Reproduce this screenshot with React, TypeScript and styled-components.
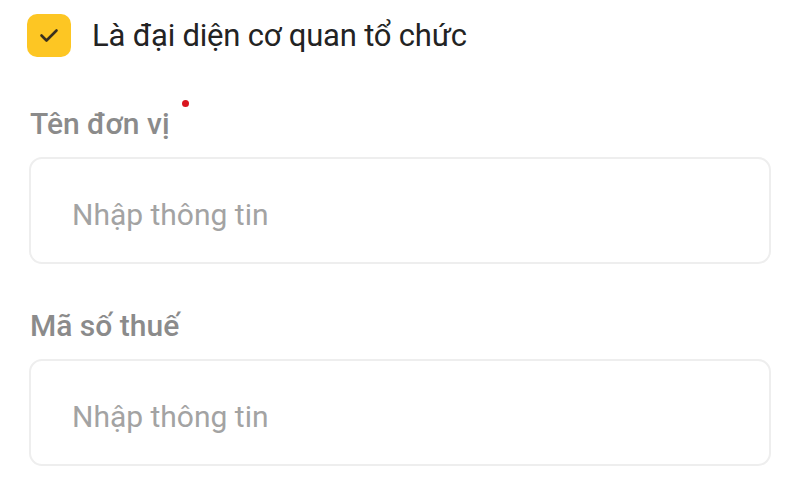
import React from "react";
import styled, { createGlobalStyle } from "styled-components";

const Global = createGlobalStyle`
  html, body { margin: 0; padding: 0; background: #ffffff; }
  body { font-family: Roboto, "Noto Sans", Arial, sans-serif; }
`;

const Page = styled.div`
  width: 798px;
  height: 481px;
  box-sizing: border-box;
  padding: 14px 27px 0 29px;
  display: flex;
  flex-direction: column;
  background: #fff;
`;

const CheckRow = styled.label`
  display: flex;
  align-items: center;
  gap: 21px;
  margin-left: -2px;
`;

const CheckBox = styled.span`
  width: 44px;
  height: 43px;
  border-radius: 10px;
  background: #fdc623;
  display: flex;
  align-items: center;
  justify-content: center;
`;

const CheckText = styled.span`
  font-size: 31px;
  line-height: 43px;
  color: #232323;
  letter-spacing: -0.2px;
`;

const Field = styled.div<{ $top: number }>`
  display: flex;
  flex-direction: column;
  margin-top: ${(p) => p.$top}px;
`;

const Label = styled.div`
  position: relative;
  align-self: flex-start;
  font-size: 30px;
  font-weight: 500;
  line-height: 34px;
  color: #8b8b8b;
  padding-left: 1px;
`;

const Required = styled.span`
  position: absolute;
  right: -19px;
  top: -7px;
  width: 7px;
  height: 7px;
  border-radius: 50%;
  background: #d9161f;
`;

const InputBox = styled.div`
  margin-top: 16px;
  height: 107px;
  box-sizing: border-box;
  border: 2px solid #eeeeee;
  border-radius: 13px;
  display: flex;
  align-items: center;
  padding: 8px 0 0 41px;
`;

const Placeholder = styled.span`
  font-size: 30px;
  color: #a3a3a3;
`;

export default function App() {
  return (
    <>
      <Global />
      <Page>
        <CheckRow>
          <CheckBox>
            <svg width="20" height="15" viewBox="0 0 20 15" fill="none">
              <path d="M2.5 7.5 L7.5 12.5 L17.5 2.5" stroke="#3a301e" strokeWidth="2.6" strokeLinecap="round" strokeLinejoin="round" />
            </svg>
          </CheckBox>
          <CheckText>Là đại diện cơ quan tổ chức</CheckText>
        </CheckRow>
        <Field $top={50}>
          <Label>
            Tên đơn vị
            <Required />
          </Label>
          <InputBox>
            <Placeholder>Nhập thông tin</Placeholder>
          </InputBox>
        </Field>
        <Field $top={45}>
          <Label>Mã số thuế</Label>
          <InputBox>
            <Placeholder>Nhập thông tin</Placeholder>
          </InputBox>
        </Field>
      </Page>
    </>
  );
}
